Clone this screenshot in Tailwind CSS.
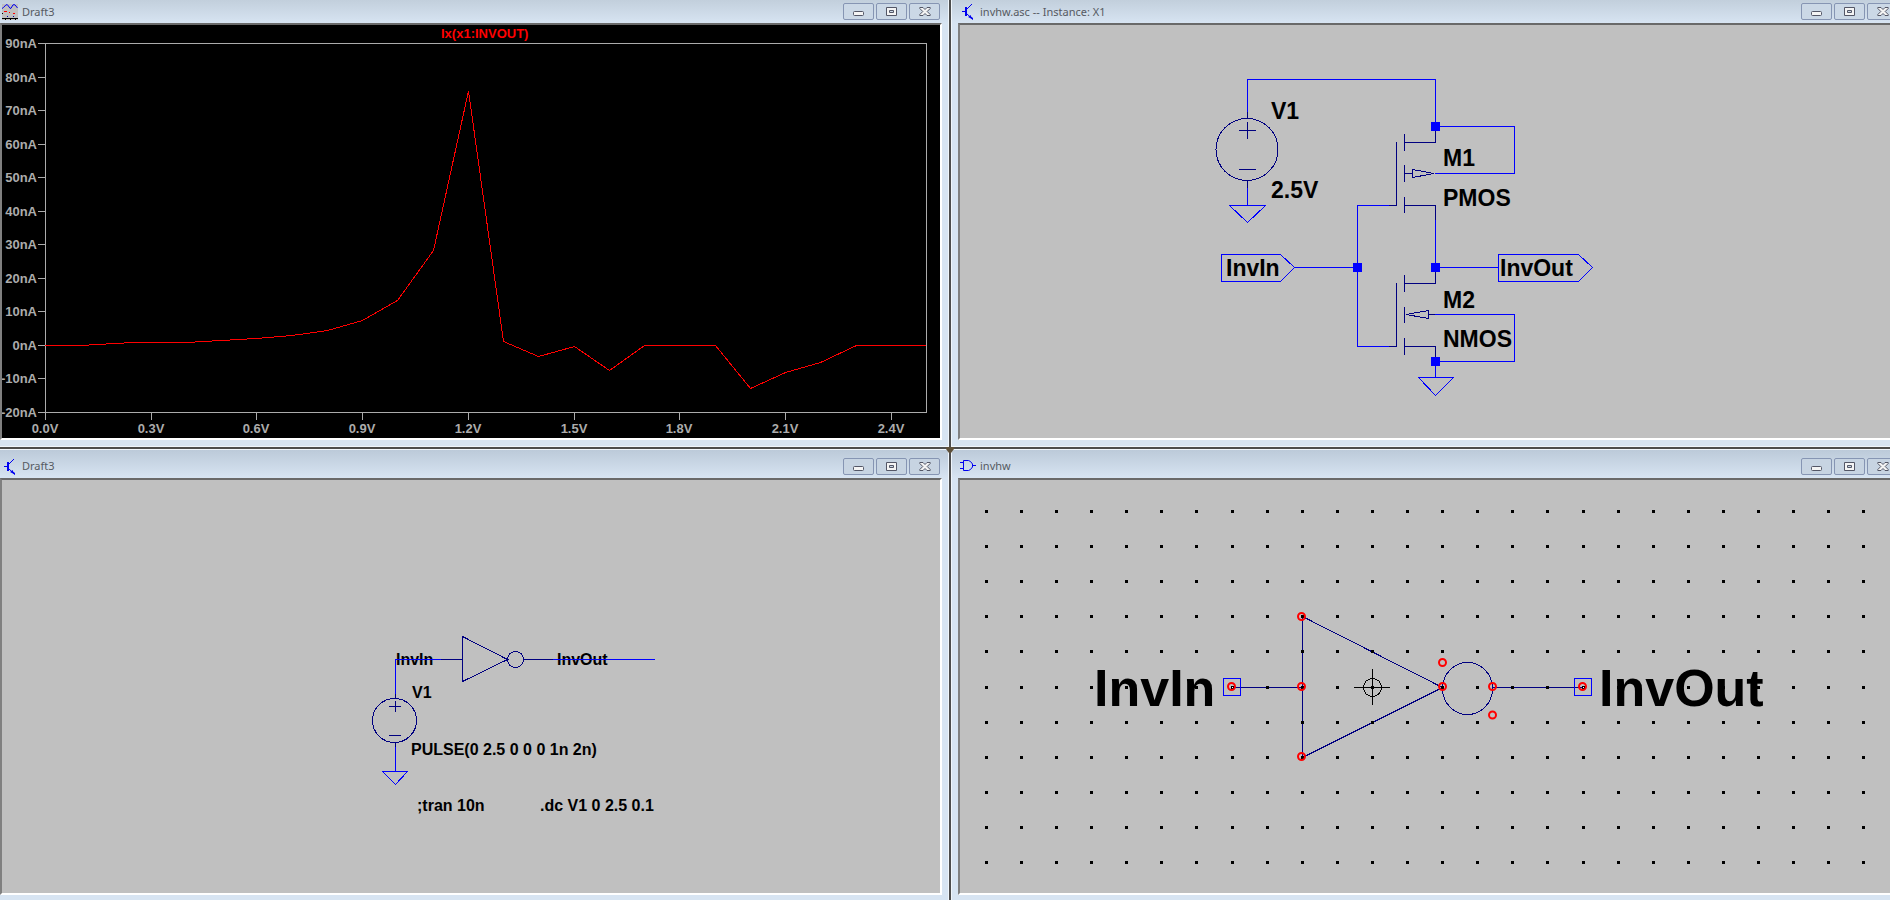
<!DOCTYPE html>
<html lang="en">
<head>
<meta charset="utf-8">
<title>Inverter simulation</title>
<script src="https://cdn.jsdelivr.net/npm/@tailwindcss/browser@4"></script>
</head>
<body class="h-screen overflow-hidden bg-[#4d4d4d] font-['Liberation_Sans',sans-serif]">

<!-- shared icons -->
<svg class="hidden">
  <symbol id="i-min" viewBox="0 0 11 5"><rect x=".5" y=".5" width="10" height="4" rx="1" fill="#f4f4f4" stroke="#535666"/></symbol>
  <symbol id="i-max" viewBox="0 0 11 9"><path fill="#f4f4f4" stroke="#535666" d="M.5 .5H10.500V8.500H.5ZM3.500 3.500V5.500H7.500V3.500Z" fill-rule="evenodd"/></symbol>
  <symbol id="i-close" viewBox="0 0 12 9"><path fill="#f4f4f4" stroke="#535666" d="M.8 .5H4L6 2.500L8 .5H11.200V1.500L8.200 4.500L11.200 7.500V8.500H8L6 6.500L4 8.500H.8V7.500L3.800 4.500L.8 1.500Z"/></symbol>
  <symbol id="i-transistor" viewBox="0 0 16 17"><g fill="none" stroke="#0000f0"><path d="M2 8.500H5"/><path stroke-width="2" d="M6 4V13"/><path d="M7 6L12 1M7 11L12.500 16"/></g><path fill="#0000f0" d="M8 14L11 12V13.500L13 15V17L11 15.500Z"/></symbol>
  <symbol id="i-gate" viewBox="0 0 16 12"><path fill="none" stroke="#0000f0" d="M0 2.500H3M0 8.500H3M3.500 .5H8.500L10.500 1.500L12.500 4V7L10.500 9.500L8.500 10.500H3.500ZM12.500 5.500H16"/></symbol>
  <symbol id="i-scope" viewBox="0 0 16 16"><path fill="#c0c0c0" d="M0 0H16V16H0Z"/><path fill="none" stroke="#0000f0" d="M0 4.500L1.500 3.500L4 .8H5.500L8 4.300H9L11 .8H13L15.500 4"/><path fill="#f00" d="M2 7H5V8H2ZM7 8H8V9H7ZM11 9H13V10H11Z"/><path fill="#000" d="M0 14H16V15H0ZM3 15H4V16H3ZM8 15H9V16H8ZM13 15H14V16H13ZM0 9H1V10H0Z"/><path fill="#00a" d="M5 12H6V13H5ZM11 12H12V13H11Z"/></symbol>
</svg>

<main class="relative grid h-full grid-cols-[minmax(0,949fr)_minmax(0,939fr)] grid-rows-[minmax(0,447fr)_minmax(0,451fr)] gap-0.5">

  <!-- waveform viewer -->
  <section class="flex flex-col border-r border-b border-[#f0f6fc] bg-[#d7e4f2] pr-1.5 pb-1.5">
    <header class="flex h-[23px] shrink-0 items-center bg-linear-to-b from-[#c2cfdc] to-[#d7e4f2] pr-0.5 pl-0.5 -mr-1.5">
      <svg class="mr-1 h-4 w-4"><use href="#i-scope"/></svg>
      <h2 class="grow font-['Noto_Sans',sans-serif] text-[11px] leading-4 text-[#565a62]">Draft3</h2>
      <div class="mr-1.5 flex gap-0.5">
        <button aria-label="Minimize" class="flex h-[17px] w-[31px] items-end justify-center rounded-xs border border-[#8695b3] bg-[#cbd8e6] pb-[3px]"><svg class="h-[5px] w-[11px]"><use href="#i-min"/></svg></button>
        <button aria-label="Maximize" class="flex h-[17px] w-[31px] items-center justify-center rounded-xs border border-[#8695b3] bg-[#cbd8e6]"><svg class="h-[9px] w-[11px]"><use href="#i-max"/></svg></button>
        <button aria-label="Close" class="flex h-[17px] w-[31px] items-center justify-center rounded-xs border border-[#8695b3] bg-[#cbd8e6]"><svg class="h-[9px] w-3"><use href="#i-close"/></svg></button>
      </div>
    </header>
    <div class="min-h-0 grow border-2 border-t-[#696969] border-r-white border-b-white border-l-[#808080] bg-black">
      <svg class="h-full w-full" viewBox="2 25 938 413" font-size="13" font-weight="bold">
        <g fill="none" stroke="#acacac" shape-rendering="crispEdges">
          <path d="M45.500 43.500H926.500V412.500H45.500Z"/>
          <path d="M38 43.500H45M38 77.500H45M38 110.500H45M38 144.500H45M38 177.500H45M38 211.500H45M38 244.500H45M38 278.500H45M38 311.500H45M38 345.500H45M38 378.500H45M38 412.500H45"/>
          <path d="M45.500 413V420M151.500 413V420M256.500 413V420M362.500 413V420M468.500 413V420M574.500 413V420M679.500 413V420M785.500 413V420M891.500 413V420"/>
          <path stroke="#f00" d="M45 345.500H80L133 342.500H186L221 340.500L256 338.500L292 335.500L327.500 330.500L362.500 320.500L397.500 300.500L433.500 250.500L468.500 91L503.500 341.500L538.500 356.500L574.500 346.500L609.500 370.500L644.500 345.500H715.500L750.500 388.500L785.500 372.500L820.500 362.500L856.500 345.500H926"/>
        </g>
        <text x="441" y="38" fill="#f00">Ix(x1:INVOUT)</text>
        <g fill="#acacac" text-anchor="end">
          <text x="37" y="48">90nA</text><text x="37" y="82">80nA</text><text x="37" y="115">70nA</text><text x="37" y="149">60nA</text><text x="37" y="182">50nA</text><text x="37" y="216">40nA</text><text x="37" y="249">30nA</text><text x="37" y="283">20nA</text><text x="37" y="316">10nA</text><text x="37" y="350">0nA</text><text x="37" y="383">-10nA</text><text x="37" y="417">-20nA</text>
        </g>
        <g fill="#acacac" text-anchor="middle">
          <text x="45" y="433">0.0V</text><text x="151" y="433">0.3V</text><text x="256" y="433">0.6V</text><text x="362" y="433">0.9V</text><text x="468" y="433">1.2V</text><text x="574" y="433">1.5V</text><text x="679" y="433">1.8V</text><text x="785" y="433">2.1V</text><text x="891" y="433">2.4V</text>
        </g>
      </svg>
    </div>
  </section>

  <!-- inverter transistor schematic -->
  <section class="flex flex-col overflow-hidden border-b border-l border-[#f0f6fc] bg-[#d7e4f2] pb-1.5">
    <header class="-mr-2 flex h-[23px] shrink-0 items-center bg-linear-to-b from-[#c2cfdc] to-[#d7e4f2] pl-2">
      <svg class="mr-1 h-[17px] w-4"><use href="#i-transistor"/></svg>
      <h2 class="grow font-['Noto_Sans',sans-serif] text-[11px] leading-4 text-[#565a62]">invhw.asc -- Instance: X1</h2>
      <div class="flex gap-0.5">
        <button aria-label="Minimize" class="flex h-[17px] w-[31px] items-end justify-center rounded-xs border border-[#8695b3] bg-[#cbd8e6] pb-[3px]"><svg class="h-[5px] w-[11px]"><use href="#i-min"/></svg></button>
        <button aria-label="Maximize" class="flex h-[17px] w-[31px] items-center justify-center rounded-xs border border-[#8695b3] bg-[#cbd8e6]"><svg class="h-[9px] w-[11px]"><use href="#i-max"/></svg></button>
        <button aria-label="Close" class="flex h-[17px] w-[31px] items-center justify-center rounded-xs border border-[#8695b3] bg-[#cbd8e6]"><svg class="h-[9px] w-3"><use href="#i-close"/></svg></button>
      </div>
    </header>
    <div class="ml-1.5 min-h-0 grow border-y-2 border-l-2 border-t-[#696969] border-b-white border-l-[#808080] bg-[#c0c0c0]">
      <svg class="h-full w-full" viewBox="960 25 930 413" font-size="23" font-weight="bold">
        <g fill="none" stroke="#0000ff" shape-rendering="crispEdges">
          <path d="M1247.500 112V79.500H1435.500V126.500H1514.500V173.500H1435M1247.500 188V205.500M1229.500 205.500H1265.500L1247.500 222.500Z"/>
          <path d="M1389 205.500H1357.500V346.500H1389M1435.500 220V267.500H1498M1357 267.500H1294.500L1280.500 254.500H1221.500V281.500H1280.500L1294.500 267.500"/>
          <path d="M1498.500 254.500H1578.500L1592.500 267.500L1578.500 281.500H1498.500ZM1435 314.500H1514.500V361.500H1435.500V377.500M1418.500 377.500H1453.500L1435.500 395.500Z"/>
        </g>
        <g fill="none" stroke="#000080" shape-rendering="crispEdges">
          <circle cx="1247" cy="149.500" r="31"/>
          <path d="M1247.500 112V118M1247.500 181V188M1239 130.500H1256M1247.500 122V139M1239 169.500H1256"/>
          <path d="M1435.500 131V142.500H1404M1404.500 134V151M1396.500 142V205.500H1389M1404.500 165V182M1404 173.500H1412M1412.500 169.500V177.500L1434 173.500ZM1404.500 197V213M1404 205.500H1435.500V220"/>
          <path d="M1435.500 272V283.500H1404M1404.500 275V292M1396.500 283V346.500H1389M1404.500 307V323M1406 314.500L1428.500 310.500V318.500ZM1429 314.500H1435M1404.500 338V355M1404 346.500H1435.500V357"/>
        </g>
        <path fill="#0000ff" d="M1431 122h9v9h-9ZM1353 263h9v9h-9ZM1431 263h9v9h-9ZM1431 357h9v9h-9Z"/>
        <text x="1271" y="119">V1</text><text x="1271" y="198">2.5V</text>
        <text x="1443" y="166">M1</text><text x="1443" y="206">PMOS</text>
        <text x="1443" y="308">M2</text><text x="1443" y="347">NMOS</text>
        <text x="1226" y="276">InvIn</text><text x="1500" y="276">InvOut</text>
      </svg>
    </div>
  </section>

  <!-- test bench schematic -->
  <section class="flex flex-col border-t border-r border-[#f0f6fc] bg-[#d7e4f2] pr-1.5 pb-[5px]">
    <header class="-mr-1.5 flex h-7 shrink-0 items-center bg-linear-to-b from-[#bccad9] to-[#d7e4f2] pt-1.5 pr-2 pb-0.5 pl-0.5">
      <svg class="mr-1 h-[17px] w-4"><use href="#i-transistor"/></svg>
      <h2 class="grow font-['Noto_Sans',sans-serif] text-[11px] leading-4 text-[#565a62]">Draft3</h2>
      <div class="flex gap-0.5">
        <button aria-label="Minimize" class="flex h-[17px] w-[31px] items-end justify-center rounded-xs border border-[#8695b3] bg-[#c7d4e2] pb-[3px]"><svg class="h-[5px] w-[11px]"><use href="#i-min"/></svg></button>
        <button aria-label="Maximize" class="flex h-[17px] w-[31px] items-center justify-center rounded-xs border border-[#8695b3] bg-[#c7d4e2]"><svg class="h-[9px] w-[11px]"><use href="#i-max"/></svg></button>
        <button aria-label="Close" class="flex h-[17px] w-[31px] items-center justify-center rounded-xs border border-[#8695b3] bg-[#c7d4e2]"><svg class="h-[9px] w-3"><use href="#i-close"/></svg></button>
      </div>
    </header>
    <div class="min-h-0 grow border-2 border-t-[#696969] border-r-white border-b-white border-l-[#808080] bg-[#c0c0c0]">
      <svg class="h-full w-full" viewBox="2 480 938 413" font-size="16" font-weight="bold">
        <text x="396" y="665">InvIn</text><text x="557" y="665">InvOut</text>
        <g fill="none" stroke="#0000ff" shape-rendering="crispEdges">
          <path d="M441 659.500H395.500V694M553 659.500H655M395.500 747V771.500M382.500 771.500H407.500L395.500 784.500Z"/>
        </g>
        <g fill="none" stroke="#000080" shape-rendering="crispEdges">
          <path d="M441 659.500H462M462.500 636.500V681.500L507.500 659.500ZM524 659.500H553M395.500 694V699M395.500 742V747"/>
          <circle cx="515.500" cy="659.500" r="8"/>
          <circle cx="394.500" cy="720.500" r="22"/>
          <path d="M389 706.500H401M395.500 701V712M389 735.500H401"/>
        </g>
        <text x="412" y="698">V1</text>
        <text x="411" y="755">PULSE(0 2.5 0 0 0 1n 2n)</text>
        <text x="417" y="811">;tran 10n</text>
        <text x="540" y="811">.dc V1 0 2.5 0.1</text>
      </svg>
    </div>
  </section>

  <!-- inverter symbol editor -->
  <section class="flex flex-col overflow-hidden border-t border-l border-[#f0f6fc] bg-[#d7e4f2] pb-[5px]">
    <header class="-mr-2 flex h-7 shrink-0 items-center bg-linear-to-b from-[#bccad9] to-[#d7e4f2] pt-1.5 pb-0.5 pl-2">
      <svg class="mr-1 h-3 w-4"><use href="#i-gate"/></svg>
      <h2 class="grow font-['Noto_Sans',sans-serif] text-[11px] leading-4 text-[#565a62]">invhw</h2>
      <div class="flex gap-0.5">
        <button aria-label="Minimize" class="flex h-[17px] w-[31px] items-end justify-center rounded-xs border border-[#8695b3] bg-[#c7d4e2] pb-[3px]"><svg class="h-[5px] w-[11px]"><use href="#i-min"/></svg></button>
        <button aria-label="Maximize" class="flex h-[17px] w-[31px] items-center justify-center rounded-xs border border-[#8695b3] bg-[#c7d4e2]"><svg class="h-[9px] w-[11px]"><use href="#i-max"/></svg></button>
        <button aria-label="Close" class="flex h-[17px] w-[31px] items-center justify-center rounded-xs border border-[#8695b3] bg-[#c7d4e2]"><svg class="h-[9px] w-3"><use href="#i-close"/></svg></button>
      </div>
    </header>
    <div class="ml-1.5 min-h-0 grow border-y-2 border-l-2 border-t-[#696969] border-b-white border-l-[#808080] bg-[#c0c0c0]">
      <svg class="h-full w-full" viewBox="960 480 930 413" font-size="52" font-weight="bold">
        <defs><path id="dots" fill="none" stroke="#000" stroke-width="3" stroke-dasharray="3 32" d="M985 .5H1198M1231 .5H1549M1582 .5H1865"/></defs>
        <g fill="none" stroke="#000080" shape-rendering="crispEdges">
          <path d="M1233 687.500H1302M1302.500 616.500V757.500L1442.500 687.500ZM1493 687.500H1582"/>
          <ellipse cx="1467.500" cy="688.500" rx="25" ry="26"/>
        </g>
        <g shape-rendering="crispEdges">
          <use href="#dots" y="511"/><use href="#dots" y="546"/><use href="#dots" y="581"/><use href="#dots" y="616"/><use href="#dots" y="651"/><use href="#dots" y="687"/><use href="#dots" y="722"/><use href="#dots" y="757"/><use href="#dots" y="792"/><use href="#dots" y="827"/><use href="#dots" y="862"/>
          <path fill="#fff" d="M1232 687h1v1h-1ZM1583 687h1v1h-1Z"/>
        </g>
        <g fill="none" stroke="#000" shape-rendering="crispEdges"><circle cx="1372.500" cy="687.500" r="9"/><path d="M1354 687.500H1390M1372.500 669V705"/></g>
        <path fill="none" stroke="#0000ff" shape-rendering="crispEdges" d="M1223.500 678.500h17v17h-17ZM1574.500 678.500h17v17h-17Z"/>
        <g fill="none" stroke="#f00" stroke-width="2">
          <circle cx="1231.500" cy="686.500" r="3.500"/><circle cx="1301.500" cy="616.500" r="3.500"/><circle cx="1301.500" cy="686.500" r="3.500"/><circle cx="1301.500" cy="756.500" r="3.500"/><circle cx="1442.500" cy="662.500" r="3.500"/><circle cx="1442.500" cy="686.500" r="3.500"/><circle cx="1492.500" cy="686.500" r="3.500"/><circle cx="1492.500" cy="715" r="3.500"/><circle cx="1582.500" cy="686.500" r="3.500"/>
        </g>
        <text x="1094" y="706">InvIn</text><text x="1599" y="706">InvOut</text>
      </svg>
    </div>
  </section>

  <!-- splitter handle over the crossing of the four windows -->
  <svg class="absolute top-[calc((100%-2px)*447/898)] left-[calc((100%-2px)*949/1888-3px)] h-1.5 w-2" viewBox="0 0 8 6"><path fill="#5e5039" d="M0 0H8V2L5 6H3L0 2Z"/></svg>
</main>
</body>
</html>
